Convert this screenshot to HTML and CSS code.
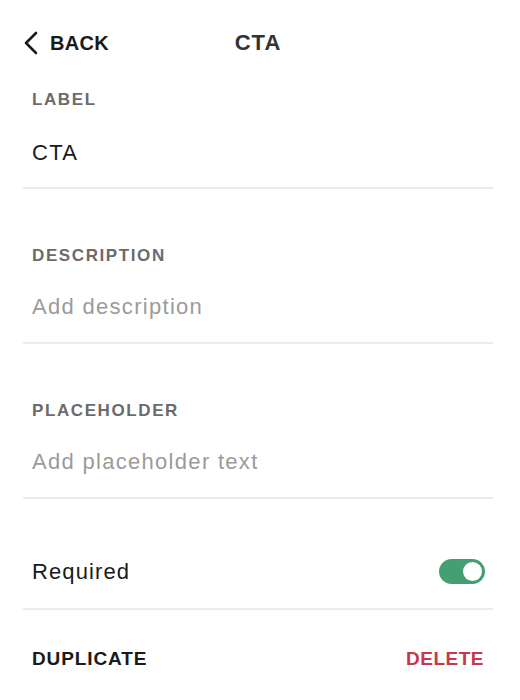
FILE: index.html
```html
<!DOCTYPE html>
<html lang="en">
<head>
  <meta charset="UTF-8">
  <meta name="viewport" content="width=device-width, initial-scale=1.0">
  <title>CTA</title>
  <link rel="stylesheet" href="styles.css">
</head>
<body>
  <!-- Panel -->
  <div class="panel">
    <!-- Header -->
    <header class="header">
      <button class="back-btn">
        <svg width="16" height="24" viewBox="0 0 16 24">
          <path d="M13 2 L3 12 L13 22" fill="none" stroke="#1a1a1a" stroke-width="2.6" stroke-linecap="round" stroke-linejoin="round"/>
        </svg>
        <span>BACK</span>
      </button>
      <h1 class="title">CTA</h1>
      <div></div>
    </header>

    <!-- Fields -->
    <div class="field first">
      <div class="field-label">LABEL</div>
      <div class="field-value">CTA</div>
    </div>

    <div class="field">
      <div class="field-label">DESCRIPTION</div>
      <div class="field-value empty">Add description</div>
    </div>

    <div class="field">
      <div class="field-label">PLACEHOLDER</div>
      <div class="field-value empty">Add placeholder text</div>
    </div>

    <!-- Required toggle -->
    <div class="row">
      <span class="row-text">Required</span>
      <span class="toggle on"><span class="knob"></span></span>
    </div>

    <!-- Actions -->
    <div class="actions">
      <button class="action">DUPLICATE</button>
      <button class="action danger">DELETE</button>
    </div>
  </div>
</body>
</html>
```

FILE: styles.css
```css
/* Global Styles */
* {
  margin: 0;
  padding: 0;
  box-sizing: border-box;
}

body {
  font-family: 'Liberation Sans', Arial, sans-serif;
  background-color: #fff;
  color: #1a1a1a;
  width: 520px;
  height: 700px;
  overflow: hidden;
}

/* Panel */
.panel {
  padding: 0 27px 0 23px;
}

/* Header */
.header {
  display: grid;
  grid-template-columns: 1fr auto 1fr;
  align-items: center;
  height: 86px;
}

.back-btn {
  display: flex;
  align-items: center;
  gap: 11px;
  background: none;
  border: none;
  font-family: inherit;
  font-size: 20px;
  font-weight: 600;
  letter-spacing: 0.3px;
  color: #1a1a1a;
  cursor: pointer;
  justify-self: start;
}

.title {
  font-size: 22px;
  font-weight: 700;
  letter-spacing: 1px;
  color: #333;
}

/* Fields */
.field {
  padding: 57px 9px 0;
  height: 155px;
  border-bottom: 2px solid #ececec;
}

.field.first {
  padding-top: 4px;
  height: 103px;
}

.field-label {
  font-size: 17px;
  font-weight: 600;
  letter-spacing: 1.6px;
  color: #6b6b6b;
  line-height: 20px;
}

.field-value {
  font-size: 22px;
  line-height: 26px;
  letter-spacing: 1.3px;
  margin-top: 28px;
  color: #1a1a1a;
}

.field.first .field-value {
  margin-top: 30px;
}

.field-value.empty {
  color: #9b9b9b;
}

/* Toggle Row */
.row {
  display: flex;
  justify-content: space-between;
  align-items: center;
  height: 111px;
  padding: 36px 8px 0 9px;
  border-bottom: 2px solid #ececec;
}

.row-text {
  font-size: 22px;
  letter-spacing: 1.1px;
}

.toggle {
  width: 46px;
  height: 25px;
  border-radius: 13px;
  background-color: #44a072;
  display: flex;
  align-items: center;
  justify-content: flex-end;
  padding: 3px;
}

.knob {
  width: 19px;
  height: 19px;
  border-radius: 50%;
  background-color: #fff;
}

/* Actions */
.actions {
  display: flex;
  justify-content: space-between;
  align-items: center;
  height: 98px;
  padding: 0 9px;
}

.action {
  background: none;
  border: none;
  font-family: inherit;
  font-size: 19px;
  font-weight: 600;
  letter-spacing: 0.9px;
  color: #1a1a1a;
  cursor: pointer;
}

.action.danger {
  color: #c9374a;
  letter-spacing: 0.5px;
}
```
